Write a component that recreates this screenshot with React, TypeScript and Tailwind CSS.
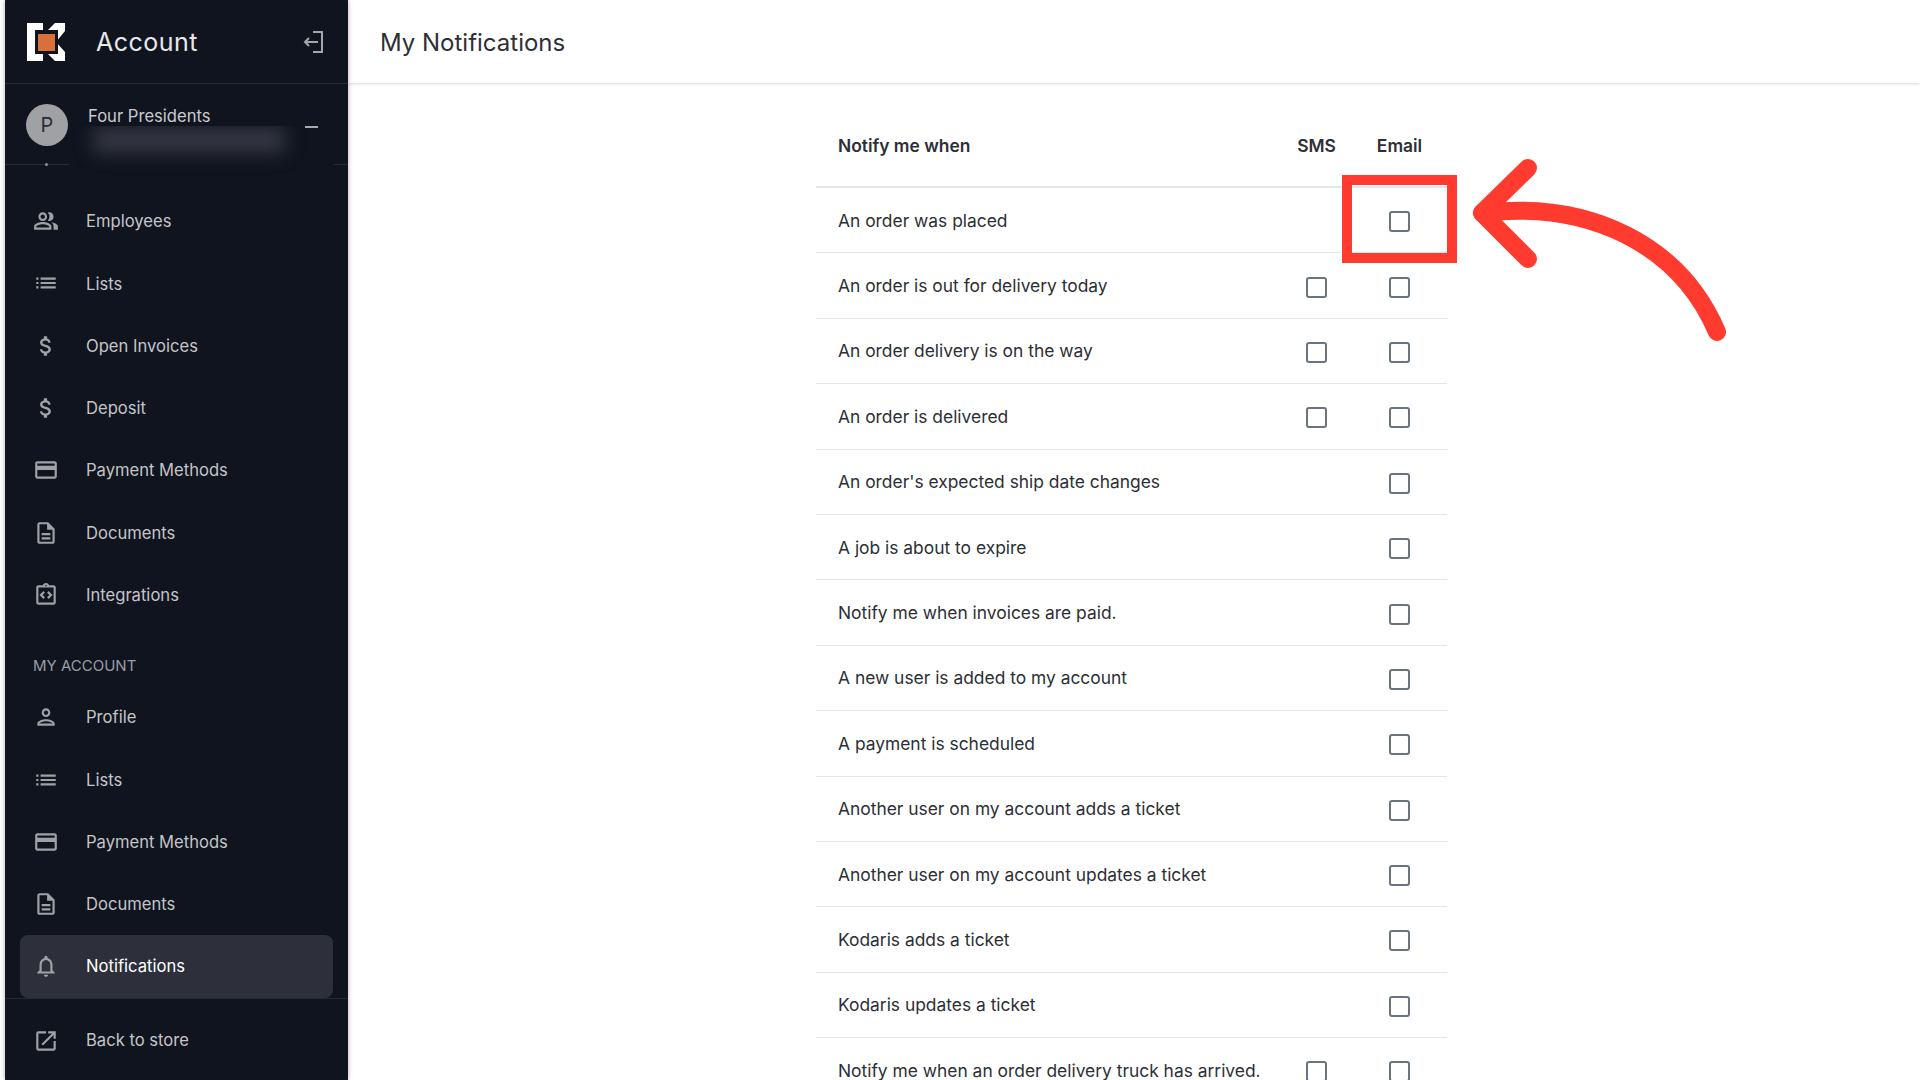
import type React from 'react'
import {
  MdAttachMoney,
  MdList,
  MdOpenInNew,
  MdOutlineCreditCard,
  MdOutlineDescription,
  MdOutlineIntegrationInstructions,
  MdOutlineNotifications,
  MdOutlinePeopleAlt,
  MdOutlinePerson,
} from 'react-icons/md'

const RED = '#ff3b30'

const companyItems: [React.ComponentType<{ size?: number }>, string][] = [
  [MdOutlinePeopleAlt, 'Employees'],
  [MdList, 'Lists'],
  [MdAttachMoney, 'Open Invoices'],
  [MdAttachMoney, 'Deposit'],
  [MdOutlineCreditCard, 'Payment Methods'],
  [MdOutlineDescription, 'Documents'],
  [MdOutlineIntegrationInstructions, 'Integrations'],
]

const accountItems: [React.ComponentType<{ size?: number }>, string][] = [
  [MdOutlinePerson, 'Profile'],
  [MdList, 'Lists'],
  [MdOutlineCreditCard, 'Payment Methods'],
  [MdOutlineDescription, 'Documents'],
]

const rows: [string, boolean][] = [
  ['An order was placed', false],
  ['An order is out for delivery today', true],
  ['An order delivery is on the way', true],
  ['An order is delivered', true],
  ["An order's expected ship date changes", false],
  ['A job is about to expire', false],
  ['Notify me when invoices are paid.', false],
  ['A new user is added to my account', false],
  ['A payment is scheduled', false],
  ['Another user on my account adds a ticket', false],
  ['Another user on my account updates a ticket', false],
  ['Kodaris adds a ticket', false],
  ['Kodaris updates a ticket', false],
  ['Notify me when an order delivery truck has arrived.', true],
]

function NavItem({
  icon: Icon,
  label,
  active,
}: {
  icon: React.ComponentType<{ size?: number }>
  label: string
  active?: boolean
}) {
  return (
    <div
      className={`mx-[15px] flex h-[62.3px] items-center gap-[27px] rounded-lg pl-[13px] ${
        active ? 'bg-[#2d303a] text-white' : 'text-[#c4c5c9]'
      }`}
    >
      <span className="flex text-[#a0a1a6]">
        <Icon size={26} />
      </span>
      <span className="mt-[1px] text-[16.6px]">{label}</span>
    </div>
  )
}

function Logo() {
  return (
    <svg width="38" height="38" viewBox="27 23 38 38" className="shrink-0">
      <path d="M27 23h16v7h-8v24h8v7H27z" fill="#fff" />
      <path d="M47 31l8-8h10v8l-9 11 9 10v9H55l-8-8z" fill="#fff" />
      <rect x="35" y="30" width="23" height="24" fill="#10141f" />
      <rect x="38" y="34" width="17" height="17" fill="#d9703a" />
    </svg>
  )
}

function Sidebar() {
  return (
    <aside className="relative z-10 flex h-[1080px] w-[343px] shrink-0 flex-col overflow-hidden bg-[#10141f] shadow-[0_0_5px_rgba(0,0,0,0.3)]">
      <div className="flex h-[84px] shrink-0 items-center border-b border-[#262a35] pl-[22px] pr-[24px]">
        <Logo />
        <span className="ml-[31px] mt-[2px] text-[25px] tracking-[0.5px] text-[#e8e8ea]">Account</span>
        <svg width="22" height="24" viewBox="0 0 22 24" fill="none" stroke="#a5a6ab" strokeWidth="2" className="ml-auto">
          <path d="M11 2h9v20h-9" />
          <path d="M16 12H3M7 8l-4 4 4 4" />
        </svg>
      </div>

      <div className="relative flex h-[81px] shrink-0 items-start border-b border-[#262a35] pl-[20px]">
        <div className="ml-px mt-[20px] flex h-[42px] w-[42px] items-center justify-center rounded-full bg-[#a0a1a5] text-[20px] text-[#2b2e38]">
          P
        </div>
        <span className="ml-[20px] mt-[20px] text-[16.6px] text-[#c9cacd]">Four Presidents</span>
        <div className="absolute left-[64px] right-[14px] top-[42px] h-[50px] overflow-hidden bg-[#10141f]">
          <div className="absolute left-[24px] top-[1px] h-[26px] w-[192px] rounded bg-[#343743] blur-[9px]" />
          <div className="absolute left-[236px] top-0 h-[2px] w-[13px] bg-[#a8a9ad]" />
        </div>
        <div className="absolute left-[40px] top-[79px] h-[3px] w-[3px] rounded-full bg-[#8f9096]" />
      </div>

      <nav className="flex flex-1 flex-col pt-[25px]">
        {companyItems.map(([icon, label], i) => (
          <NavItem key={i} icon={icon} label={label} />
        ))}
        <div className="flex h-[60px] items-end pb-[9px] pl-[28px] text-[15px] text-[#9a9ca3]">MY ACCOUNT</div>
        {accountItems.map(([icon, label], i) => (
          <NavItem key={i} icon={icon} label={label} />
        ))}
        <NavItem icon={MdOutlineNotifications} label="Notifications" active />
      </nav>

      <div className="flex h-[83px] shrink-0 items-start border-t border-[#262a35] pt-[29px]">
        <div className="mx-[15px] flex items-center gap-[27px] pl-[13px] text-[#c4c5c9]">
          <span className="flex text-[#a0a1a6]">
            <MdOpenInNew size={26} />
          </span>
          <span className="text-[16.6px]">Back to store</span>
        </div>
      </div>
    </aside>
  )
}

function Checkbox() {
  return (
    <input
      type="checkbox"
      readOnly
      className="h-[21px] w-[21px] appearance-none rounded-[3px] border-[2.5px] border-[#6b7280] bg-white"
    />
  )
}

function NotificationTable() {
  return (
    <div className="ml-[468px] w-[631px] pt-[44px] font-['Inter',sans-serif] text-[17.4px] text-[#2d2f36]">
      <div className="grid h-[61px] grid-cols-[1fr_83px_83px] border-b-2 border-[#e5e6e8] pl-[22px] pr-[6px] font-semibold leading-[38px]">
        <span>Notify me when</span>
        <span className="text-center">SMS</span>
        <span className="text-center">Email</span>
      </div>
      {rows.map(([label, sms], i) => (
        <div
          key={i}
          className="grid h-[65.4px] grid-cols-[1fr_83px_83px] items-center border-b border-[#e5e6e8] pl-[22px] pr-[6px] pt-[3px]"
        >
          <span className="mb-[2px] whitespace-nowrap">{label}</span>
          <span className="flex justify-center">{sms && <Checkbox />}</span>
          <span className="flex justify-center">
            <Checkbox />
          </span>
        </div>
      ))}
    </div>
  )
}

// red annotation drawn over the page
function Annotation() {
  return (
    <>
      <div className="absolute left-[1342px] top-[175px] z-20 h-[88px] w-[115px] border-[10px] border-[#ff3b30]" />
      <svg className="absolute left-0 top-0 z-20" width="1920" height="1080" fill="none" stroke={RED} strokeWidth="18" strokeLinecap="round" strokeLinejoin="round">
        <path d="M1528 168l-46 45 46 46" />
        <path d="M1482 213C1590 200 1680 245 1717 332" />
      </svg>
    </>
  )
}

export default function App() {
  return (
    <div className="relative flex h-[1080px] w-[1920px] overflow-hidden bg-white pl-[5px] font-['Inter',sans-serif] antialiased">
      <Sidebar />
      <main className="flex min-w-0 flex-1 flex-col">
        <header className="flex h-[83px] shrink-0 items-center pl-[32px] pt-[2px] text-[24px] text-[#2d2f36] shadow-[0_1px_3px_rgba(0,0,0,0.15)]">
          My Notifications
        </header>
        <div className="flex-1 overflow-hidden">
          <NotificationTable />
        </div>
      </main>
      <Annotation />
    </div>
  )
}
